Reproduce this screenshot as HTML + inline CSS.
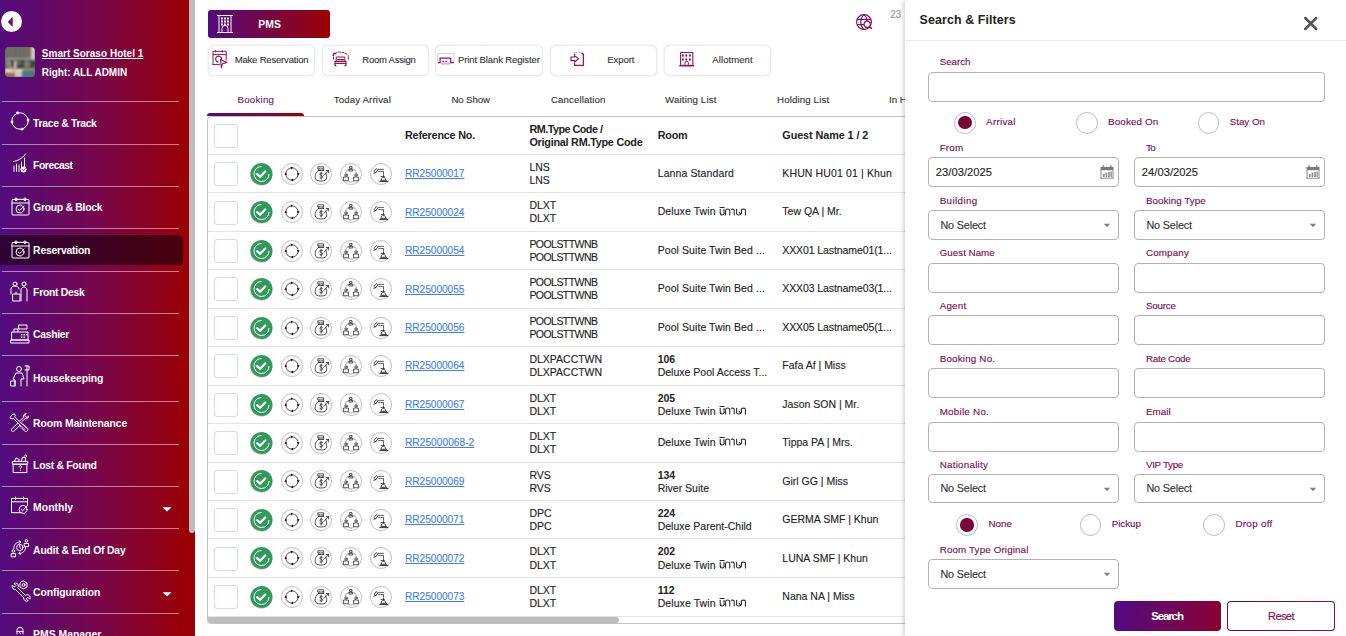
<!DOCTYPE html><html><head><meta charset="utf-8"><style>
*{box-sizing:border-box}
html,body{margin:0;padding:0}
body{width:1346px;height:636px;overflow:hidden;position:relative;background:#fff;font-family:"Liberation Sans",sans-serif}
.t{position:absolute;white-space:nowrap;line-height:1}
.n{-webkit-text-stroke:.12px currentColor}
.abs{position:absolute}
.cb{position:absolute;width:24px;height:24px;border:1px solid #d3d8f3;border-radius:3px;background:#fff}
.rc{position:absolute;width:22.2px;height:22.2px;border-radius:50%;border:1px solid #c2c2c2;background:#fff}
.bx{position:absolute;border:1px solid #b3b3b3;border-radius:4px;background:#fff}
.sep{position:absolute;left:2px;width:177px;height:1px;background:rgba(255,255,255,.5)}
.rl{position:absolute;left:208px;width:700px;height:1px;background:#e2e2e2}
</style></head><body>

<div class="abs" style="left:0;top:0;width:195px;height:636px;background:linear-gradient(90deg,#510b7e 0%,#77064b 50%,#9b0003 97%,#9b0003 100%)"></div>
<div class="abs" style="left:189px;top:0;width:6px;height:533px;background:#bdbdbd;border-radius:0 0 3px 3px"></div>
<div class="abs" style="left:1px;top:10.8px;width:21px;height:21px;border-radius:50%;background:#fff"></div>
<svg class="abs" style="left:0;top:0" width="30" height="40"><path d="M7.8 21.9 L12.7 16.7 L12.7 27.1 Z" fill="#7a0a4a"/></svg>
<div class="abs" style="left:5px;top:46.8px;width:30px;height:30px;border-radius:4px;overflow:hidden;background:#6b6a60"><svg width="30" height="30" style="filter:blur(.8px)">
<rect width="30" height="30" fill="#6e6c62"/>
<rect x="0" y="0" width="30" height="12" fill="#48707e"/>
<g fill="#8c6a4e"><rect x="2" y="0" width="2.5" height="11"/><rect x="6.5" y="0" width="2.5" height="11"/><rect x="11.5" y="0" width="2.5" height="11"/><rect x="16" y="0" width="2.5" height="11"/><rect x="20.5" y="0" width="2.5" height="11"/><rect x="24" y="0" width="2" height="11"/></g>
<rect x="26" y="0" width="4" height="17" fill="#c9cdca"/>
<rect x="0" y="11" width="27" height="2.2" fill="#9a9a92"/>
<rect x="0" y="13.2" width="30" height="8" fill="#3e403b"/>
<circle cx="3.5" cy="16.5" r="3.2" fill="#8a8c80"/><circle cx="22" cy="17" r="3.5" fill="#7b8070"/><rect x="9" y="14" width="2.5" height="8" fill="#d4d6d0"/><circle cx="14" cy="16" r="2" fill="#6a7466"/>
<rect x="0" y="21" width="30" height="9" fill="#a88d6c"/>
<rect x="0" y="21.5" width="8" height="4" fill="#e0ddd4"/><rect x="9" y="22.5" width="9" height="3" fill="#e6e2d8"/><rect x="4" y="19.5" width="4" height="3" fill="#b59a76"/>
<rect x="17" y="23.5" width="13" height="6.5" fill="#3f7e7a"/><rect x="0" y="26" width="9" height="4" fill="#8e7052"/><rect x="10" y="26" width="7" height="4" fill="#cfc6b6"/>
</svg></div>
<div class="t" style="left:41.8px;top:49.04px;font-size:10px;color:#fff;font-weight:bold;text-decoration:underline;letter-spacing:0.022px;">Smart Soraso Hotel 1</div>
<div class="t" style="left:41.8px;top:68.33px;font-size:10px;color:#fff;font-weight:bold;letter-spacing:-0.028px;">Right: ALL ADMIN</div>
<div class="sep" style="top:101.0px"></div>
<div class="sep" style="top:144.1px"></div>
<div class="sep" style="top:185.7px"></div>
<div class="sep" style="top:228.2px"></div>
<div class="sep" style="top:270.6px"></div>
<div class="sep" style="top:312.5px"></div>
<div class="sep" style="top:354.6px"></div>
<div class="sep" style="top:401.3px"></div>
<div class="sep" style="top:443.8px"></div>
<div class="sep" style="top:486.2px"></div>
<div class="sep" style="top:527.8px"></div>
<div class="sep" style="top:569.6px"></div>
<div class="sep" style="top:612.8px"></div>
<div class="abs" style="left:0;top:235.2px;width:183px;height:29.7px;background:rgba(25,0,12,.62);border-radius:0 4px 4px 0"></div>
<div class="t" style="left:33.1px;top:119.00px;font-size:10.4px;color:#fff;font-weight:bold;letter-spacing:-0.317px;">Trace &amp; Track</div>
<div class="t" style="left:33.1px;top:161.10px;font-size:10.4px;color:#fff;font-weight:bold;letter-spacing:-0.479px;">Forecast</div>
<div class="t" style="left:33.1px;top:203.10px;font-size:10.4px;color:#fff;font-weight:bold;letter-spacing:-0.280px;">Group &amp; Block</div>
<div class="t" style="left:33.1px;top:246.10px;font-size:10.4px;color:#fff;font-weight:bold;letter-spacing:-0.214px;">Reservation</div>
<div class="t" style="left:33.1px;top:288.10px;font-size:10.4px;color:#fff;font-weight:bold;letter-spacing:-0.288px;">Front Desk</div>
<div class="t" style="left:33.1px;top:330.10px;font-size:10.4px;color:#fff;font-weight:bold;letter-spacing:-0.312px;">Cashier</div>
<div class="t" style="left:33.1px;top:374.10px;font-size:10.4px;color:#fff;font-weight:bold;letter-spacing:-0.061px;">Housekeeping</div>
<div class="t" style="left:33.1px;top:419.10px;font-size:10.4px;color:#fff;font-weight:bold;letter-spacing:-0.072px;">Room Maintenance</div>
<div class="t" style="left:33.1px;top:461.10px;font-size:10.4px;color:#fff;font-weight:bold;letter-spacing:-0.291px;">Lost &amp; Found</div>
<div class="t" style="left:33.1px;top:503.10px;font-size:10.4px;color:#fff;font-weight:bold;letter-spacing:0.026px;">Monthly</div>
<div class="t" style="left:33.1px;top:546.10px;font-size:10.4px;color:#fff;font-weight:bold;letter-spacing:-0.191px;">Audit &amp; End Of Day</div>
<div class="t" style="left:33.1px;top:588.10px;font-size:10.4px;color:#fff;font-weight:bold;letter-spacing:-0.071px;">Configuration</div>
<div class="t" style="left:33.1px;top:630.10px;font-size:10.4px;color:#fff;font-weight:bold;">PMS Manager</div>
<svg class="abs" style="left:161px;top:506px" width="12" height="7"><path d="M1.5 1.3 L10.5 1.3 L6 5.5 Z" fill="#fff"/></svg>
<svg class="abs" style="left:161px;top:591px" width="12" height="7"><path d="M1.5 1.3 L10.5 1.3 L6 5.5 Z" fill="#fff"/></svg>
<svg class="abs" style="left:9px;top:110px" width="22" height="22" fill="none" stroke="#fff" stroke-width="1" stroke-linecap="round" stroke-linejoin="round"><circle cx="11" cy="11" r="8.2"/><g fill="#fff" stroke="none"><circle cx="8.5" cy="3" r="1.4"/><circle cx="19" cy="10" r="1.4"/><circle cx="13" cy="19.2" r="1.4"/><circle cx="3" cy="12" r="1.4"/></g></svg>
<svg class="abs" style="left:12px;top:153px" width="16" height="20" fill="none" stroke="#fff" stroke-width="1" stroke-linecap="round" stroke-linejoin="round"><path d="M2 18.5V13M4.5 18.5V11M7 18.5V12M9.5 18.5V9M12.5 15V5"/><path d="M1.5 8.5 C5 8 10 6 13.5 1"/><circle cx="11.5" cy="16.5" r="2.6" fill="#fff"/><path d="M10.3 16.5l1 1 1.7-1.8" stroke="#700850" stroke-width=".9"/></svg>
<svg class="abs" style="left:10.5px;top:196.6px" width="19" height="19" fill="none" stroke="#fff" stroke-width="1" stroke-linecap="round" stroke-linejoin="round"><rect x="1" y="2.5" width="17" height="15.5" rx="1"/><path d="M1 6H18"/><circle cx="5" cy="2.3" r="1.3"/><circle cx="14" cy="2.3" r="1.3"/><path d="M6.3 2.3h6.4"/><circle cx="9" cy="12" r="4"/><path d="M7.2 12l1.6 1.5 4.2-4.5"/></svg>
<svg class="abs" style="left:10.5px;top:239.5px" width="19" height="19" fill="none" stroke="#fff" stroke-width="1" stroke-linecap="round" stroke-linejoin="round"><rect x="1" y="2.5" width="17" height="15.5" rx="1"/><path d="M1 6H18"/><circle cx="5" cy="2.3" r="1.3"/><circle cx="14" cy="2.3" r="1.3"/><path d="M6.3 2.3h6.4"/><circle cx="9" cy="12" r="4"/><path d="M7.2 12l1.6 1.5 4.2-4.5"/></svg>
<svg class="abs" style="left:10px;top:281px" width="20" height="22" fill="none" stroke="#fff" stroke-width="1" stroke-linecap="round" stroke-linejoin="round"><circle cx="5" cy="3" r="2"/><circle cx="14" cy="3" r="2"/><path d="M1 13V8c0-2 2-3 4-3s4 1 4 3"/><path d="M11 20V9c0-2 1.5-3 3-3s3 1 3 3v11"/><rect x="3" y="13" width="7" height="7"/><path d="M6 13v-2"/></svg>
<svg class="abs" style="left:10px;top:324px" width="20" height="20" fill="none" stroke="#fff" stroke-width="1" stroke-linecap="round" stroke-linejoin="round"><rect x="9" y="1" width="8" height="4"/><path d="M2 8h16v8H2z"/><path d="M4 8V5h4v3"/><path d="M1 16h18v3H1z"/><g fill="#fff" stroke="none"><rect x="11" y="10" width="1.4" height="1.4"/><rect x="13.5" y="10" width="1.4" height="1.4"/><rect x="16" y="10" width="1.4" height="1.4"/><rect x="11" y="12.5" width="1.4" height="1.4"/><rect x="13.5" y="12.5" width="1.4" height="1.4"/></g></svg>
<svg class="abs" style="left:10px;top:365px" width="20" height="24" fill="none" stroke="#fff" stroke-width="1" stroke-linecap="round" stroke-linejoin="round"><circle cx="9" cy="4" r="2.5"/><path d="M5 21v-6l-2 -1 3-6h6l2 6h-3v7"/><rect x="1" y="16" width="4" height="5"/><path d="M17 1v20M15 1h4v4h-4"/></svg>
<svg class="abs" style="left:8px;top:412px" width="22" height="22" fill="none" stroke="#fff" stroke-width="1" stroke-linecap="round" stroke-linejoin="round"><path d="M4.6 2.6l1.8-.8 1 1.9-.9 1 7.6 7.6 1-.4 4.4 4.4c.6.6.6 1.6 0 2.2l-.6.6c-.6.6-1.6.6-2.2 0l-4.4-4.4.4-1L5.1 6.2l-1 .9-1.9-1z"/><path d="M13.8 14.4l3.4 3.4M15.2 13l3.4 3.4" stroke-width=".7"/><path d="M12.2 8.6l3.4-3.4c-.6-1.8.6-3.6 2.6-3.6l-1.4 1.6.6 1.6 1.6.6 1.6-1.4c0 2-1.8 3.2-3.6 2.6l-3.4 3.4M9.6 11.2L4 16.8c-.8.8-.8 2 0 2.4.5.5 1.6.4 2.4-.4l5.6-5.6"/></svg>
<svg class="abs" style="left:10px;top:451px" width="20" height="24" fill="none" stroke="#fff" stroke-width="1" stroke-linecap="round" stroke-linejoin="round"><path d="M3.5 13.2h13.4v8.4H3.5z"/><path d="M2.7 10.4h15v2.8h-15z"/><path d="M4.5 10.4l1.5-3.4 3.4 1.6-.8 1.8M11.5 10.4l.7-4 3.4.3-.3 3.7"/><path d="M14 6.6c-.2-1.4.8-2.8 2-2.6 1 .2 1.1 1.4.3 1.8"/><path d="M9.2 16c0-.8.6-1.4 1.2-1.4s1.2.5 1.2 1.2c0 .8-1.2.9-1.2 1.8M10.4 19v.3"/></svg>
<svg class="abs" style="left:10px;top:496px" width="20" height="20" fill="none" stroke="#fff" stroke-width="1" stroke-linecap="round" stroke-linejoin="round"><path d="M11 16.7H1.5V2.4h16v7"/><path d="M1.5 5.8h16"/><path d="M5.5 1v2.8M13.5 1v2.8"/><circle cx="13.1" cy="13.4" r="4"/><path d="M11.1 13.4l1.6 1.5 4.6-5.4"/></svg>
<svg class="abs" style="left:9px;top:536px" width="22" height="24" fill="none" stroke="#fff" stroke-width="1" stroke-linecap="round" stroke-linejoin="round"><circle cx="10.8" cy="11.5" r="3.2"/><path d="M10.8 9.6v2l1 .8"/><path d="M4.8 12.5c-.4-4 3-7 6.6-6.6M16.6 10.8c.4 4-3 7-6.6 6.6"/><path d="M10.2 4.8l1.5 1.1-1.2 1.4M11.3 18.5l-1.5-1.1 1.2-1.4"/><circle cx="17.4" cy="4.8" r="1.3"/><path d="M15.2 10.2V7.4h4.4v2.8z"/><circle cx="4.4" cy="15" r="1.3"/><path d="M2.2 20.4v-2.8h4.4v2.8z"/></svg>
<svg class="abs" style="left:9px;top:578px" width="24" height="24" fill="none" stroke="#fff" stroke-width="1" stroke-linecap="round" stroke-linejoin="round"><path d="M14.5 3l3.5 2v4l-3.5 2-3.5-2V5z"/><circle cx="14.6" cy="7" r="1.4"/><path d="M6.6 11.6l8 8M8.6 9.6l8 8"/><path d="M6.6 11.6a3.2 3.2 0 0 1-3.2-4.6l2 2 1.6-1.6-2-2a3.2 3.2 0 0 1 4.6 3.2"/><path d="M14.6 19.6a3.2 3.2 0 0 0 4.6 3.2l-2-2 1.6-1.6 2 2a3.2 3.2 0 0 0-3.2-4.6"/></svg>
<svg class="abs" style="left:10px;top:624px" width="20" height="14" fill="none" stroke="#fff" stroke-width="1" stroke-linecap="round" stroke-linejoin="round"><path d="M7 10V6.5c0-2 1.4-3.2 3-3.2s3 1.2 3 3.2V10"/><path d="M7 7.4h6M9.3 8.6l1.4.8"/></svg>
<div class="abs" style="left:208px;top:10px;width:122px;height:28.4px;border-radius:3px;background:linear-gradient(90deg,#520a7e,#9c0004)"></div>
<svg class="abs" style="left:216px;top:14px" width="18" height="20" fill="none" stroke="#fff" stroke-width="1"><path d="M1 1.5h16M1 18.5h16M3 1.5v17M15 1.5v17"/><g fill="#fff" stroke="none"><rect x="5" y="3.5" width="2" height="2"/><rect x="8" y="3.5" width="2" height="2"/><rect x="11" y="3.5" width="2" height="2"/><rect x="5" y="6.5" width="2" height="2"/><rect x="8" y="6.5" width="2" height="2"/><rect x="11" y="6.5" width="2" height="2"/><rect x="5" y="9.5" width="2" height="2"/><rect x="8" y="9.5" width="2" height="2"/><rect x="11" y="9.5" width="2" height="2"/></g><path d="M6 18.5v-4a3 3 0 0 1 6 0v4"/></svg>
<div class="t" style="left:258.3px;top:20.20px;font-size:10.4px;color:#fff;font-weight:bold;">PMS</div>
<svg class="abs" style="left:853.5px;top:12.3px" width="20" height="20"><defs><linearGradient id="gg" x1="0" x2="1" y1="0" y2="1"><stop offset="0" stop-color="#5e1a8a"/><stop offset="1" stop-color="#9a0a30"/></linearGradient></defs><g fill="none" stroke="url(#gg)" stroke-width="1.15"><circle cx="10" cy="10" r="7.4"/><path d="M3.2 7.3h13.6M3.2 12.6h7.5"/><path d="M10 2.6c-2.2 2-3.2 4.6-3.2 7.4s1 5.4 3.2 7.4M10 2.6c2.2 2 3.2 4.6 3.2 7.4"/><circle cx="13.2" cy="12.2" r="3.1" fill="#fff"/><path d="M15.5 14.5l2.3 2.3" stroke-width="1.5"/></g></svg>
<div class="t n" style="left:890.2px;top:9.94px;font-size:10px;color:#8c97a6;font-weight:normal;letter-spacing:-0.262px;">23</div>
<div class="abs" style="left:207.5px;top:45.2px;width:107.6px;height:30.8px;border:1px solid #ececec;border-radius:6px;box-shadow:0 0 2px rgba(0,0,0,.13);background:#fff"></div>
<div class="t n" style="left:234.7px;top:54.96px;font-size:9.5px;color:#333;font-weight:normal;letter-spacing:-0.179px;">Make Reservation</div>
<div class="abs" style="left:321.7px;top:45.2px;width:107.6px;height:30.8px;border:1px solid #ececec;border-radius:6px;box-shadow:0 0 2px rgba(0,0,0,.13);background:#fff"></div>
<div class="t n" style="left:362.3px;top:54.96px;font-size:9.5px;color:#333;font-weight:normal;letter-spacing:-0.241px;">Room Assign</div>
<div class="abs" style="left:435.4px;top:45.2px;width:107.6px;height:30.8px;border:1px solid #ececec;border-radius:6px;box-shadow:0 0 2px rgba(0,0,0,.13);background:#fff"></div>
<div class="t n" style="left:458.1px;top:54.96px;font-size:9.5px;color:#333;font-weight:normal;letter-spacing:-0.115px;">Print Blank Register</div>
<div class="abs" style="left:549.6px;top:45.2px;width:107.6px;height:30.8px;border:1px solid #ececec;border-radius:6px;box-shadow:0 0 2px rgba(0,0,0,.13);background:#fff"></div>
<div class="t n" style="left:607.3px;top:54.96px;font-size:9.5px;color:#333;font-weight:normal;letter-spacing:-0.063px;">Export</div>
<div class="abs" style="left:663.7px;top:45.2px;width:107.6px;height:30.8px;border:1px solid #ececec;border-radius:6px;box-shadow:0 0 2px rgba(0,0,0,.13);background:#fff"></div>
<div class="t n" style="left:712.3px;top:54.96px;font-size:9.5px;color:#333;font-weight:normal;letter-spacing:0.092px;">Allotment</div>
<svg class="abs" style="left:208px;top:46px" width="28" height="26" fill="none" stroke="#8b1a52" stroke-width="1" stroke-linecap="round" stroke-linejoin="round"><path d="M5 18.6V5.3h13.2v8.8M5 18.6h6.5"/><path d="M5 8.6h13.2"/><path d="M7.4 4.6v1.4M14.3 4.6v1.4"/><path d="M13.6 13.7a3 3 0 1 0-3.4 2.4" stroke-width="1.1"/><path d="M12.5 13.4l6.3 3-4.3 1.3-1.2 3.9z" fill="#fff" stroke-width="1.1"/></svg>
<svg class="abs" style="left:328px;top:46px" width="28" height="26" fill="none" stroke="#8b1a52" stroke-width="1" stroke-linecap="round" stroke-linejoin="round"><path d="M8.2 15.4v-4.4h8.6v4.4"/><path d="M7 19.4v-4h11v4M7 17.3h11M7.8 19.4v.6M17.2 19.4v.6" stroke-width="1.2"/><path d="M9.6 13.6h2.4M13 13.6h2.4" stroke-width="1.4"/><path d="M5.5 13V9.8c.5-2.6 3-3.6 6-3.6 4 0 7.5 1.4 8.8 3.4v3.6" stroke-dasharray="2 1.2"/><path d="M5 9.5l.8-2.4 2.2.8" stroke-width="1.1"/></svg>
<svg class="abs" style="left:434px;top:46px" width="28" height="26"><path d="M3.9 16.6V7.6h16v9" fill="none" stroke="#d0d0d0" stroke-width="1"/><path d="M3.9 16.6h2.2v-4.4h10.6v4.4h3.2" fill="none" stroke="#8b1a52" stroke-width="1.2"/><path d="M7 17.6h9" stroke="#d9b0c4" stroke-width="2"/><path d="M8.6 15.4h1.6M11.4 15.4h1.6" stroke="#8b1a52" stroke-width="1.3"/></svg>
<svg class="abs" style="left:566px;top:46px" width="28" height="26" fill="none" stroke="#8b1a52" stroke-width="1" stroke-linecap="round" stroke-linejoin="round"><path d="M8.2 6.6h7.8" stroke="#ccc"/><path d="M16 7.4l1.4 1v11H8.6v-2.2M8.6 8.2v.3" stroke-width="1.3"/><path d="M5 11h3.6V9.6l4 3.2-4 3.2v-1.4H5z" stroke-width="1.2"/></svg>
<svg class="abs" style="left:674px;top:46px" width="28" height="26" fill="none" stroke="#8b1a52" stroke-width="1" stroke-linecap="round" stroke-linejoin="round"><path d="M6.6 18.3V6.5h12.2v11.8" stroke-width="1.1"/><path d="M6 19.6h13.4" stroke-width="1.8"/><g fill="#8b1a52" stroke="none"><rect x="8" y="8.4" width="1.8" height="2.2"/><rect x="11.4" y="8.4" width="1.8" height="2.2"/><rect x="15" y="8.4" width="1.8" height="2.2"/><rect x="8" y="12.4" width="1.8" height="2.2"/><rect x="11.4" y="12.4" width="1.8" height="2.2"/><rect x="15" y="12.4" width="1.8" height="2.2"/></g><path d="M11 18.3v-1.3a1.7 1.7 0 0 1 3.4 0v1.3"/></svg>
<div class="t n" style="left:237.5px;top:95.49px;font-size:9.7px;color:#6b1b6b;font-weight:normal;letter-spacing:0.230px;">Booking</div>
<div class="t n" style="left:333.7px;top:95.49px;font-size:9.7px;color:#333;font-weight:normal;letter-spacing:0.138px;">Today Arrival</div>
<div class="t n" style="left:451.4px;top:95.49px;font-size:9.7px;color:#333;font-weight:normal;letter-spacing:-0.119px;">No Show</div>
<div class="t n" style="left:551px;top:95.49px;font-size:9.7px;color:#333;font-weight:normal;letter-spacing:0.107px;">Cancellation</div>
<div class="t n" style="left:665px;top:95.49px;font-size:9.7px;color:#333;font-weight:normal;letter-spacing:0.153px;">Waiting List</div>
<div class="t n" style="left:777px;top:95.49px;font-size:9.7px;color:#333;font-weight:normal;letter-spacing:0.134px;">Holding List</div>
<div class="t n" style="left:889px;top:95.49px;font-size:9.7px;color:#333;font-weight:normal;">In House</div>
<div class="abs" style="left:207px;top:116px;width:760px;height:508px;border:1px solid #c2c2c2;border-right:none;border-radius:5px 0 0 4px"></div>
<div class="abs" style="left:207px;top:112.8px;width:97px;height:3.6px;border-radius:3px 3px 0 0;background:linear-gradient(90deg,#520a7e,#9c0004)"></div>
<div class="cb" style="left:214px;top:124px"></div>
<div class="t" style="left:405px;top:130.06px;font-size:10.8px;color:#222;font-weight:bold;letter-spacing:-0.200px;">Reference No.</div>
<div class="t" style="left:529.4px;top:123.96px;font-size:10.8px;color:#222;font-weight:bold;letter-spacing:-0.514px;">RM.Type Code /</div>
<div class="t" style="left:529.4px;top:137.06px;font-size:10.8px;color:#222;font-weight:bold;letter-spacing:-0.234px;">Original RM.Type Code</div>
<div class="t" style="left:657.7px;top:130.06px;font-size:10.8px;color:#222;font-weight:bold;letter-spacing:-0.196px;">Room</div>
<div class="t" style="left:782.3px;top:130.06px;font-size:10.8px;color:#222;font-weight:bold;letter-spacing:-0.067px;">Guest Name 1 / 2</div>
<div class="rl" style="top:153.8px"></div>
<div class="cb" style="left:214px;top:162.10px"></div>
<svg class="abs" style="left:249px;top:161.80px" width="25" height="26"><circle cx="12.2" cy="12.8" r="11" fill="#c8c8c8"/><circle cx="12.5" cy="12" r="11" fill="#2f9a5c"/><path d="M12.5 4.5 A7.5 7.5 0 1 0 20 12" fill="none" stroke="#fff" stroke-width="1"/><path d="M8.2 12.1l2.8 2.6 5.2-5.2" fill="none" stroke="#fff" stroke-width="2.3" stroke-linecap="round" stroke-linejoin="round"/></svg>
<div class="rc" style="left:280.9px;top:162.70px"></div>
<div class="rc" style="left:310.1px;top:162.70px"></div>
<div class="rc" style="left:340.0px;top:162.70px"></div>
<div class="rc" style="left:370.3px;top:162.70px"></div>
<svg class="abs" style="left:282px;top:163.80px" width="20" height="20" fill="none" stroke="#1a1a1a" stroke-width=".75" stroke-linecap="round" stroke-linejoin="round"><circle cx="10" cy="10" r="6.2"/><g fill="#111" stroke="none"><path d="M8.8 2.4l2.4 1.4-2.4 1.4z"/><path d="M14.8 9.2l1.4 2.4 1.4-2.4z"/><path d="M11.2 14.6l-2.4 1.4 2.4 1.4z"/><path d="M2.4 10.8l1.4-2.4 1.4 2.4z"/></g></svg>
<svg class="abs" style="left:311.2px;top:163.80px" width="20" height="20" fill="none" stroke="#1a1a1a" stroke-width=".75" stroke-linecap="round" stroke-linejoin="round"><path d="M7.2 2.8h5.4v2.2H7.2z"/><path d="M8 5L7.5 6.5M12 5l.5 1.5"/><path d="M7.5 6.5C4.2 8.5 4 12 4.3 14 4.6 16.2 6.5 17 10 17s5.4-.8 5.7-3c.2-1.5-.1-3.5-1.1-5"/><path d="M7.5 6.5h5"/><path d="M11.6 9.6c-.4-.8-2.8-1-2.8.6 0 1.4 2.8 1.1 2.8 2.6s-2.6 1.5-3 .6M10.2 8.2V15"/><path d="M12.8 11.5l4.6-4.8M15.2 6.5h2.4v2.4"/></svg>
<svg class="abs" style="left:341.1px;top:163.80px" width="20" height="20" fill="none" stroke="#1a1a1a" stroke-width=".75" stroke-linecap="round" stroke-linejoin="round"><path d="M9 2.6h2v1.8H9zM8.3 5.4h3.4v1.6H8.3z"/><circle cx="5" cy="11" r="1.2"/><path d="M2.6 16.4v-3.4h4.8v3.4z"/><circle cx="15" cy="11" r="1.2"/><path d="M12.6 16.4v-3.4h4.8v3.4z"/><path d="M4.6 9c.6-2.2 2-3.4 3.2-3.8M15.4 9c-.6-2.2-2-3.4-3.2-3.8M7.6 17.4c1.5.8 3.3.8 4.8 0" stroke-dasharray="1.2 1.2" stroke="#666"/></svg>
<svg class="abs" style="left:371.4px;top:163.80px" width="20" height="20" fill="none" stroke="#1a1a1a" stroke-width=".75" stroke-linecap="round" stroke-linejoin="round"><path d="M3.2 7.2l2-2.6 1.6 1.4-2 2.6z"/><path d="M2.8 9.5l2.4-1.3"/><path d="M7.5 5.4h2M10.5 5.4h2M7.8 7.6h1.5M10.3 7.6h2.2" /><path d="M12.5 8.5v1.5M12.5 11v1.5"/><path d="M10 12.6h3.5"/><path d="M10.2 15.5c0-1.2.8-2 2.2-2s2.2.8 2.2 2"/><path d="M8.8 17.6h8M9.8 16.3h6" stroke-width=".9"/></svg>
<div class="t n" style="left:405px;top:169.21px;font-size:10.15px;color:#3f7ff0;font-weight:normal;text-decoration:underline;letter-spacing:-0.027px;">RR25000017</div>
<div class="t n" style="left:529.4px;top:161.91px;font-size:10.5px;color:#222;font-weight:normal;">LNS</div>
<div class="t n" style="left:529.4px;top:175.01px;font-size:10.5px;color:#222;font-weight:normal;">LNS</div>
<div class="t n" style="left:657.7px;top:168.01px;font-size:10.5px;color:#222;font-weight:normal;letter-spacing:0.108px;">Lanna Standard</div>
<div class="t n" style="left:782.3px;top:168.01px;font-size:10.5px;color:#222;font-weight:normal;letter-spacing:0.130px;">KHUN HU01 01 | Khun</div>
<div class="rl" style="top:192.35px"></div>
<div class="cb" style="left:214px;top:200.55px"></div>
<svg class="abs" style="left:249px;top:200.25px" width="25" height="26"><circle cx="12.2" cy="12.8" r="11" fill="#c8c8c8"/><circle cx="12.5" cy="12" r="11" fill="#2f9a5c"/><path d="M12.5 4.5 A7.5 7.5 0 1 0 20 12" fill="none" stroke="#fff" stroke-width="1"/><path d="M8.2 12.1l2.8 2.6 5.2-5.2" fill="none" stroke="#fff" stroke-width="2.3" stroke-linecap="round" stroke-linejoin="round"/></svg>
<div class="rc" style="left:280.9px;top:201.15px"></div>
<div class="rc" style="left:310.1px;top:201.15px"></div>
<div class="rc" style="left:340.0px;top:201.15px"></div>
<div class="rc" style="left:370.3px;top:201.15px"></div>
<svg class="abs" style="left:282px;top:202.25px" width="20" height="20" fill="none" stroke="#1a1a1a" stroke-width=".75" stroke-linecap="round" stroke-linejoin="round"><circle cx="10" cy="10" r="6.2"/><g fill="#111" stroke="none"><path d="M8.8 2.4l2.4 1.4-2.4 1.4z"/><path d="M14.8 9.2l1.4 2.4 1.4-2.4z"/><path d="M11.2 14.6l-2.4 1.4 2.4 1.4z"/><path d="M2.4 10.8l1.4-2.4 1.4 2.4z"/></g></svg>
<svg class="abs" style="left:311.2px;top:202.25px" width="20" height="20" fill="none" stroke="#1a1a1a" stroke-width=".75" stroke-linecap="round" stroke-linejoin="round"><path d="M7.2 2.8h5.4v2.2H7.2z"/><path d="M8 5L7.5 6.5M12 5l.5 1.5"/><path d="M7.5 6.5C4.2 8.5 4 12 4.3 14 4.6 16.2 6.5 17 10 17s5.4-.8 5.7-3c.2-1.5-.1-3.5-1.1-5"/><path d="M7.5 6.5h5"/><path d="M11.6 9.6c-.4-.8-2.8-1-2.8.6 0 1.4 2.8 1.1 2.8 2.6s-2.6 1.5-3 .6M10.2 8.2V15"/><path d="M12.8 11.5l4.6-4.8M15.2 6.5h2.4v2.4"/></svg>
<svg class="abs" style="left:341.1px;top:202.25px" width="20" height="20" fill="none" stroke="#1a1a1a" stroke-width=".75" stroke-linecap="round" stroke-linejoin="round"><path d="M9 2.6h2v1.8H9zM8.3 5.4h3.4v1.6H8.3z"/><circle cx="5" cy="11" r="1.2"/><path d="M2.6 16.4v-3.4h4.8v3.4z"/><circle cx="15" cy="11" r="1.2"/><path d="M12.6 16.4v-3.4h4.8v3.4z"/><path d="M4.6 9c.6-2.2 2-3.4 3.2-3.8M15.4 9c-.6-2.2-2-3.4-3.2-3.8M7.6 17.4c1.5.8 3.3.8 4.8 0" stroke-dasharray="1.2 1.2" stroke="#666"/></svg>
<svg class="abs" style="left:371.4px;top:202.25px" width="20" height="20" fill="none" stroke="#1a1a1a" stroke-width=".75" stroke-linecap="round" stroke-linejoin="round"><path d="M3.2 7.2l2-2.6 1.6 1.4-2 2.6z"/><path d="M2.8 9.5l2.4-1.3"/><path d="M7.5 5.4h2M10.5 5.4h2M7.8 7.6h1.5M10.3 7.6h2.2" /><path d="M12.5 8.5v1.5M12.5 11v1.5"/><path d="M10 12.6h3.5"/><path d="M10.2 15.5c0-1.2.8-2 2.2-2s2.2.8 2.2 2"/><path d="M8.8 17.6h8M9.8 16.3h6" stroke-width=".9"/></svg>
<div class="t n" style="left:405px;top:207.66px;font-size:10.15px;color:#3f7ff0;font-weight:normal;text-decoration:underline;letter-spacing:-0.027px;">RR25000024</div>
<div class="t n" style="left:529.4px;top:200.36px;font-size:10.5px;color:#222;font-weight:normal;">DLXT</div>
<div class="t n" style="left:529.4px;top:213.46px;font-size:10.5px;color:#222;font-weight:normal;">DLXT</div>
<div class="t n" style="left:657.7px;top:206.46px;font-size:10.5px;color:#222;font-weight:normal;letter-spacing:0.085px;">Deluxe Twin</div>
<svg class="abs" style="left:719.3px;top:205.65px" width="28" height="10" fill="none" stroke="#262626" stroke-width="1.05" stroke-linecap="round"><path d="M1.2 3.2V7.6Q1.2 9 2.7 9H3.4Q5 9 5 7.6V3.2M1 1.5H5.2M1.2 7.2l.9.9"/><path d="M6.6 9V4.8Q6.6 3 8.6 3T10.8 4.8V9M6.6 6.6l-.7.7"/><path d="M12.2 3.3Q15 2.6 15.2 4.4V9"/><path d="M17.6 3.2V7.6Q17.6 9 19.6 9T22.4 7.6V3.2M20 6.2l1.6 1.6"/><path d="M23.4 3.3Q26.2 2.6 26.4 4.4V9"/></svg>
<div class="t n" style="left:782.3px;top:206.46px;font-size:10.5px;color:#222;font-weight:normal;">Tew QA | Mr.</div>
<div class="rl" style="top:230.80px"></div>
<div class="cb" style="left:214px;top:239.00px"></div>
<svg class="abs" style="left:249px;top:238.70px" width="25" height="26"><circle cx="12.2" cy="12.8" r="11" fill="#c8c8c8"/><circle cx="12.5" cy="12" r="11" fill="#2f9a5c"/><path d="M12.5 4.5 A7.5 7.5 0 1 0 20 12" fill="none" stroke="#fff" stroke-width="1"/><path d="M8.2 12.1l2.8 2.6 5.2-5.2" fill="none" stroke="#fff" stroke-width="2.3" stroke-linecap="round" stroke-linejoin="round"/></svg>
<div class="rc" style="left:280.9px;top:239.60px"></div>
<div class="rc" style="left:310.1px;top:239.60px"></div>
<div class="rc" style="left:340.0px;top:239.60px"></div>
<div class="rc" style="left:370.3px;top:239.60px"></div>
<svg class="abs" style="left:282px;top:240.70px" width="20" height="20" fill="none" stroke="#1a1a1a" stroke-width=".75" stroke-linecap="round" stroke-linejoin="round"><circle cx="10" cy="10" r="6.2"/><g fill="#111" stroke="none"><path d="M8.8 2.4l2.4 1.4-2.4 1.4z"/><path d="M14.8 9.2l1.4 2.4 1.4-2.4z"/><path d="M11.2 14.6l-2.4 1.4 2.4 1.4z"/><path d="M2.4 10.8l1.4-2.4 1.4 2.4z"/></g></svg>
<svg class="abs" style="left:311.2px;top:240.70px" width="20" height="20" fill="none" stroke="#1a1a1a" stroke-width=".75" stroke-linecap="round" stroke-linejoin="round"><path d="M7.2 2.8h5.4v2.2H7.2z"/><path d="M8 5L7.5 6.5M12 5l.5 1.5"/><path d="M7.5 6.5C4.2 8.5 4 12 4.3 14 4.6 16.2 6.5 17 10 17s5.4-.8 5.7-3c.2-1.5-.1-3.5-1.1-5"/><path d="M7.5 6.5h5"/><path d="M11.6 9.6c-.4-.8-2.8-1-2.8.6 0 1.4 2.8 1.1 2.8 2.6s-2.6 1.5-3 .6M10.2 8.2V15"/><path d="M12.8 11.5l4.6-4.8M15.2 6.5h2.4v2.4"/></svg>
<svg class="abs" style="left:341.1px;top:240.70px" width="20" height="20" fill="none" stroke="#1a1a1a" stroke-width=".75" stroke-linecap="round" stroke-linejoin="round"><path d="M9 2.6h2v1.8H9zM8.3 5.4h3.4v1.6H8.3z"/><circle cx="5" cy="11" r="1.2"/><path d="M2.6 16.4v-3.4h4.8v3.4z"/><circle cx="15" cy="11" r="1.2"/><path d="M12.6 16.4v-3.4h4.8v3.4z"/><path d="M4.6 9c.6-2.2 2-3.4 3.2-3.8M15.4 9c-.6-2.2-2-3.4-3.2-3.8M7.6 17.4c1.5.8 3.3.8 4.8 0" stroke-dasharray="1.2 1.2" stroke="#666"/></svg>
<svg class="abs" style="left:371.4px;top:240.70px" width="20" height="20" fill="none" stroke="#1a1a1a" stroke-width=".75" stroke-linecap="round" stroke-linejoin="round"><path d="M3.2 7.2l2-2.6 1.6 1.4-2 2.6z"/><path d="M2.8 9.5l2.4-1.3"/><path d="M7.5 5.4h2M10.5 5.4h2M7.8 7.6h1.5M10.3 7.6h2.2" /><path d="M12.5 8.5v1.5M12.5 11v1.5"/><path d="M10 12.6h3.5"/><path d="M10.2 15.5c0-1.2.8-2 2.2-2s2.2.8 2.2 2"/><path d="M8.8 17.6h8M9.8 16.3h6" stroke-width=".9"/></svg>
<div class="t n" style="left:405px;top:246.11px;font-size:10.15px;color:#3f7ff0;font-weight:normal;text-decoration:underline;letter-spacing:-0.027px;">RR25000054</div>
<div class="t n" style="left:529.4px;top:238.81px;font-size:10.5px;color:#222;font-weight:normal;letter-spacing:-0.545px;">POOLSTTWNB</div>
<div class="t n" style="left:529.4px;top:251.91px;font-size:10.5px;color:#222;font-weight:normal;letter-spacing:-0.545px;">POOLSTTWNB</div>
<div class="t n" style="left:657.7px;top:244.91px;font-size:10.5px;color:#222;font-weight:normal;letter-spacing:0.076px;">Pool Suite Twin Bed ...</div>
<div class="t n" style="left:782.3px;top:244.91px;font-size:10.5px;color:#222;font-weight:normal;letter-spacing:-0.093px;">XXX01 Lastname01(1...</div>
<div class="rl" style="top:269.25px"></div>
<div class="cb" style="left:214px;top:277.45px"></div>
<svg class="abs" style="left:249px;top:277.15px" width="25" height="26"><circle cx="12.2" cy="12.8" r="11" fill="#c8c8c8"/><circle cx="12.5" cy="12" r="11" fill="#2f9a5c"/><path d="M12.5 4.5 A7.5 7.5 0 1 0 20 12" fill="none" stroke="#fff" stroke-width="1"/><path d="M8.2 12.1l2.8 2.6 5.2-5.2" fill="none" stroke="#fff" stroke-width="2.3" stroke-linecap="round" stroke-linejoin="round"/></svg>
<div class="rc" style="left:280.9px;top:278.05px"></div>
<div class="rc" style="left:310.1px;top:278.05px"></div>
<div class="rc" style="left:340.0px;top:278.05px"></div>
<div class="rc" style="left:370.3px;top:278.05px"></div>
<svg class="abs" style="left:282px;top:279.15px" width="20" height="20" fill="none" stroke="#1a1a1a" stroke-width=".75" stroke-linecap="round" stroke-linejoin="round"><circle cx="10" cy="10" r="6.2"/><g fill="#111" stroke="none"><path d="M8.8 2.4l2.4 1.4-2.4 1.4z"/><path d="M14.8 9.2l1.4 2.4 1.4-2.4z"/><path d="M11.2 14.6l-2.4 1.4 2.4 1.4z"/><path d="M2.4 10.8l1.4-2.4 1.4 2.4z"/></g></svg>
<svg class="abs" style="left:311.2px;top:279.15px" width="20" height="20" fill="none" stroke="#1a1a1a" stroke-width=".75" stroke-linecap="round" stroke-linejoin="round"><path d="M7.2 2.8h5.4v2.2H7.2z"/><path d="M8 5L7.5 6.5M12 5l.5 1.5"/><path d="M7.5 6.5C4.2 8.5 4 12 4.3 14 4.6 16.2 6.5 17 10 17s5.4-.8 5.7-3c.2-1.5-.1-3.5-1.1-5"/><path d="M7.5 6.5h5"/><path d="M11.6 9.6c-.4-.8-2.8-1-2.8.6 0 1.4 2.8 1.1 2.8 2.6s-2.6 1.5-3 .6M10.2 8.2V15"/><path d="M12.8 11.5l4.6-4.8M15.2 6.5h2.4v2.4"/></svg>
<svg class="abs" style="left:341.1px;top:279.15px" width="20" height="20" fill="none" stroke="#1a1a1a" stroke-width=".75" stroke-linecap="round" stroke-linejoin="round"><path d="M9 2.6h2v1.8H9zM8.3 5.4h3.4v1.6H8.3z"/><circle cx="5" cy="11" r="1.2"/><path d="M2.6 16.4v-3.4h4.8v3.4z"/><circle cx="15" cy="11" r="1.2"/><path d="M12.6 16.4v-3.4h4.8v3.4z"/><path d="M4.6 9c.6-2.2 2-3.4 3.2-3.8M15.4 9c-.6-2.2-2-3.4-3.2-3.8M7.6 17.4c1.5.8 3.3.8 4.8 0" stroke-dasharray="1.2 1.2" stroke="#666"/></svg>
<svg class="abs" style="left:371.4px;top:279.15px" width="20" height="20" fill="none" stroke="#1a1a1a" stroke-width=".75" stroke-linecap="round" stroke-linejoin="round"><path d="M3.2 7.2l2-2.6 1.6 1.4-2 2.6z"/><path d="M2.8 9.5l2.4-1.3"/><path d="M7.5 5.4h2M10.5 5.4h2M7.8 7.6h1.5M10.3 7.6h2.2" /><path d="M12.5 8.5v1.5M12.5 11v1.5"/><path d="M10 12.6h3.5"/><path d="M10.2 15.5c0-1.2.8-2 2.2-2s2.2.8 2.2 2"/><path d="M8.8 17.6h8M9.8 16.3h6" stroke-width=".9"/></svg>
<div class="t n" style="left:405px;top:284.56px;font-size:10.15px;color:#3f7ff0;font-weight:normal;text-decoration:underline;letter-spacing:-0.027px;">RR25000055</div>
<div class="t n" style="left:529.4px;top:277.26px;font-size:10.5px;color:#222;font-weight:normal;letter-spacing:-0.545px;">POOLSTTWNB</div>
<div class="t n" style="left:529.4px;top:290.36px;font-size:10.5px;color:#222;font-weight:normal;letter-spacing:-0.545px;">POOLSTTWNB</div>
<div class="t n" style="left:657.7px;top:283.36px;font-size:10.5px;color:#222;font-weight:normal;letter-spacing:0.076px;">Pool Suite Twin Bed ...</div>
<div class="t n" style="left:782.3px;top:283.36px;font-size:10.5px;color:#222;font-weight:normal;letter-spacing:-0.093px;">XXX03 Lastname03(1...</div>
<div class="rl" style="top:307.70px"></div>
<div class="cb" style="left:214px;top:315.90px"></div>
<svg class="abs" style="left:249px;top:315.60px" width="25" height="26"><circle cx="12.2" cy="12.8" r="11" fill="#c8c8c8"/><circle cx="12.5" cy="12" r="11" fill="#2f9a5c"/><path d="M12.5 4.5 A7.5 7.5 0 1 0 20 12" fill="none" stroke="#fff" stroke-width="1"/><path d="M8.2 12.1l2.8 2.6 5.2-5.2" fill="none" stroke="#fff" stroke-width="2.3" stroke-linecap="round" stroke-linejoin="round"/></svg>
<div class="rc" style="left:280.9px;top:316.50px"></div>
<div class="rc" style="left:310.1px;top:316.50px"></div>
<div class="rc" style="left:340.0px;top:316.50px"></div>
<div class="rc" style="left:370.3px;top:316.50px"></div>
<svg class="abs" style="left:282px;top:317.60px" width="20" height="20" fill="none" stroke="#1a1a1a" stroke-width=".75" stroke-linecap="round" stroke-linejoin="round"><circle cx="10" cy="10" r="6.2"/><g fill="#111" stroke="none"><path d="M8.8 2.4l2.4 1.4-2.4 1.4z"/><path d="M14.8 9.2l1.4 2.4 1.4-2.4z"/><path d="M11.2 14.6l-2.4 1.4 2.4 1.4z"/><path d="M2.4 10.8l1.4-2.4 1.4 2.4z"/></g></svg>
<svg class="abs" style="left:311.2px;top:317.60px" width="20" height="20" fill="none" stroke="#1a1a1a" stroke-width=".75" stroke-linecap="round" stroke-linejoin="round"><path d="M7.2 2.8h5.4v2.2H7.2z"/><path d="M8 5L7.5 6.5M12 5l.5 1.5"/><path d="M7.5 6.5C4.2 8.5 4 12 4.3 14 4.6 16.2 6.5 17 10 17s5.4-.8 5.7-3c.2-1.5-.1-3.5-1.1-5"/><path d="M7.5 6.5h5"/><path d="M11.6 9.6c-.4-.8-2.8-1-2.8.6 0 1.4 2.8 1.1 2.8 2.6s-2.6 1.5-3 .6M10.2 8.2V15"/><path d="M12.8 11.5l4.6-4.8M15.2 6.5h2.4v2.4"/></svg>
<svg class="abs" style="left:341.1px;top:317.60px" width="20" height="20" fill="none" stroke="#1a1a1a" stroke-width=".75" stroke-linecap="round" stroke-linejoin="round"><path d="M9 2.6h2v1.8H9zM8.3 5.4h3.4v1.6H8.3z"/><circle cx="5" cy="11" r="1.2"/><path d="M2.6 16.4v-3.4h4.8v3.4z"/><circle cx="15" cy="11" r="1.2"/><path d="M12.6 16.4v-3.4h4.8v3.4z"/><path d="M4.6 9c.6-2.2 2-3.4 3.2-3.8M15.4 9c-.6-2.2-2-3.4-3.2-3.8M7.6 17.4c1.5.8 3.3.8 4.8 0" stroke-dasharray="1.2 1.2" stroke="#666"/></svg>
<svg class="abs" style="left:371.4px;top:317.60px" width="20" height="20" fill="none" stroke="#1a1a1a" stroke-width=".75" stroke-linecap="round" stroke-linejoin="round"><path d="M3.2 7.2l2-2.6 1.6 1.4-2 2.6z"/><path d="M2.8 9.5l2.4-1.3"/><path d="M7.5 5.4h2M10.5 5.4h2M7.8 7.6h1.5M10.3 7.6h2.2" /><path d="M12.5 8.5v1.5M12.5 11v1.5"/><path d="M10 12.6h3.5"/><path d="M10.2 15.5c0-1.2.8-2 2.2-2s2.2.8 2.2 2"/><path d="M8.8 17.6h8M9.8 16.3h6" stroke-width=".9"/></svg>
<div class="t n" style="left:405px;top:323.01px;font-size:10.15px;color:#3f7ff0;font-weight:normal;text-decoration:underline;letter-spacing:-0.027px;">RR25000056</div>
<div class="t n" style="left:529.4px;top:315.71px;font-size:10.5px;color:#222;font-weight:normal;letter-spacing:-0.545px;">POOLSTTWNB</div>
<div class="t n" style="left:529.4px;top:328.81px;font-size:10.5px;color:#222;font-weight:normal;letter-spacing:-0.545px;">POOLSTTWNB</div>
<div class="t n" style="left:657.7px;top:321.81px;font-size:10.5px;color:#222;font-weight:normal;letter-spacing:0.076px;">Pool Suite Twin Bed ...</div>
<div class="t n" style="left:782.3px;top:321.81px;font-size:10.5px;color:#222;font-weight:normal;letter-spacing:-0.093px;">XXX05 Lastname05(1...</div>
<div class="rl" style="top:346.15px"></div>
<div class="cb" style="left:214px;top:354.35px"></div>
<svg class="abs" style="left:249px;top:354.05px" width="25" height="26"><circle cx="12.2" cy="12.8" r="11" fill="#c8c8c8"/><circle cx="12.5" cy="12" r="11" fill="#2f9a5c"/><path d="M12.5 4.5 A7.5 7.5 0 1 0 20 12" fill="none" stroke="#fff" stroke-width="1"/><path d="M8.2 12.1l2.8 2.6 5.2-5.2" fill="none" stroke="#fff" stroke-width="2.3" stroke-linecap="round" stroke-linejoin="round"/></svg>
<div class="rc" style="left:280.9px;top:354.95px"></div>
<div class="rc" style="left:310.1px;top:354.95px"></div>
<div class="rc" style="left:340.0px;top:354.95px"></div>
<div class="rc" style="left:370.3px;top:354.95px"></div>
<svg class="abs" style="left:282px;top:356.05px" width="20" height="20" fill="none" stroke="#1a1a1a" stroke-width=".75" stroke-linecap="round" stroke-linejoin="round"><circle cx="10" cy="10" r="6.2"/><g fill="#111" stroke="none"><path d="M8.8 2.4l2.4 1.4-2.4 1.4z"/><path d="M14.8 9.2l1.4 2.4 1.4-2.4z"/><path d="M11.2 14.6l-2.4 1.4 2.4 1.4z"/><path d="M2.4 10.8l1.4-2.4 1.4 2.4z"/></g></svg>
<svg class="abs" style="left:311.2px;top:356.05px" width="20" height="20" fill="none" stroke="#1a1a1a" stroke-width=".75" stroke-linecap="round" stroke-linejoin="round"><path d="M7.2 2.8h5.4v2.2H7.2z"/><path d="M8 5L7.5 6.5M12 5l.5 1.5"/><path d="M7.5 6.5C4.2 8.5 4 12 4.3 14 4.6 16.2 6.5 17 10 17s5.4-.8 5.7-3c.2-1.5-.1-3.5-1.1-5"/><path d="M7.5 6.5h5"/><path d="M11.6 9.6c-.4-.8-2.8-1-2.8.6 0 1.4 2.8 1.1 2.8 2.6s-2.6 1.5-3 .6M10.2 8.2V15"/><path d="M12.8 11.5l4.6-4.8M15.2 6.5h2.4v2.4"/></svg>
<svg class="abs" style="left:341.1px;top:356.05px" width="20" height="20" fill="none" stroke="#1a1a1a" stroke-width=".75" stroke-linecap="round" stroke-linejoin="round"><path d="M9 2.6h2v1.8H9zM8.3 5.4h3.4v1.6H8.3z"/><circle cx="5" cy="11" r="1.2"/><path d="M2.6 16.4v-3.4h4.8v3.4z"/><circle cx="15" cy="11" r="1.2"/><path d="M12.6 16.4v-3.4h4.8v3.4z"/><path d="M4.6 9c.6-2.2 2-3.4 3.2-3.8M15.4 9c-.6-2.2-2-3.4-3.2-3.8M7.6 17.4c1.5.8 3.3.8 4.8 0" stroke-dasharray="1.2 1.2" stroke="#666"/></svg>
<svg class="abs" style="left:371.4px;top:356.05px" width="20" height="20" fill="none" stroke="#1a1a1a" stroke-width=".75" stroke-linecap="round" stroke-linejoin="round"><path d="M3.2 7.2l2-2.6 1.6 1.4-2 2.6z"/><path d="M2.8 9.5l2.4-1.3"/><path d="M7.5 5.4h2M10.5 5.4h2M7.8 7.6h1.5M10.3 7.6h2.2" /><path d="M12.5 8.5v1.5M12.5 11v1.5"/><path d="M10 12.6h3.5"/><path d="M10.2 15.5c0-1.2.8-2 2.2-2s2.2.8 2.2 2"/><path d="M8.8 17.6h8M9.8 16.3h6" stroke-width=".9"/></svg>
<div class="t n" style="left:405px;top:361.46px;font-size:10.15px;color:#3f7ff0;font-weight:normal;text-decoration:underline;letter-spacing:-0.027px;">RR25000064</div>
<div class="t n" style="left:529.4px;top:354.16px;font-size:10.5px;color:#222;font-weight:normal;">DLXPACCTWN</div>
<div class="t n" style="left:529.4px;top:367.26px;font-size:10.5px;color:#222;font-weight:normal;">DLXPACCTWN</div>
<div class="t" style="left:657.7px;top:354.16px;font-size:10.5px;color:#222;font-weight:bold;">106</div>
<div class="t n" style="left:657.7px;top:367.26px;font-size:10.5px;color:#222;font-weight:normal;">Deluxe Pool Access T...</div>
<div class="t n" style="left:782.3px;top:360.26px;font-size:10.5px;color:#222;font-weight:normal;">Fafa Af | Miss</div>
<div class="rl" style="top:384.60px"></div>
<div class="cb" style="left:214px;top:392.80px"></div>
<svg class="abs" style="left:249px;top:392.50px" width="25" height="26"><circle cx="12.2" cy="12.8" r="11" fill="#c8c8c8"/><circle cx="12.5" cy="12" r="11" fill="#2f9a5c"/><path d="M12.5 4.5 A7.5 7.5 0 1 0 20 12" fill="none" stroke="#fff" stroke-width="1"/><path d="M8.2 12.1l2.8 2.6 5.2-5.2" fill="none" stroke="#fff" stroke-width="2.3" stroke-linecap="round" stroke-linejoin="round"/></svg>
<div class="rc" style="left:280.9px;top:393.40px"></div>
<div class="rc" style="left:310.1px;top:393.40px"></div>
<div class="rc" style="left:340.0px;top:393.40px"></div>
<div class="rc" style="left:370.3px;top:393.40px"></div>
<svg class="abs" style="left:282px;top:394.50px" width="20" height="20" fill="none" stroke="#1a1a1a" stroke-width=".75" stroke-linecap="round" stroke-linejoin="round"><circle cx="10" cy="10" r="6.2"/><g fill="#111" stroke="none"><path d="M8.8 2.4l2.4 1.4-2.4 1.4z"/><path d="M14.8 9.2l1.4 2.4 1.4-2.4z"/><path d="M11.2 14.6l-2.4 1.4 2.4 1.4z"/><path d="M2.4 10.8l1.4-2.4 1.4 2.4z"/></g></svg>
<svg class="abs" style="left:311.2px;top:394.50px" width="20" height="20" fill="none" stroke="#1a1a1a" stroke-width=".75" stroke-linecap="round" stroke-linejoin="round"><path d="M7.2 2.8h5.4v2.2H7.2z"/><path d="M8 5L7.5 6.5M12 5l.5 1.5"/><path d="M7.5 6.5C4.2 8.5 4 12 4.3 14 4.6 16.2 6.5 17 10 17s5.4-.8 5.7-3c.2-1.5-.1-3.5-1.1-5"/><path d="M7.5 6.5h5"/><path d="M11.6 9.6c-.4-.8-2.8-1-2.8.6 0 1.4 2.8 1.1 2.8 2.6s-2.6 1.5-3 .6M10.2 8.2V15"/><path d="M12.8 11.5l4.6-4.8M15.2 6.5h2.4v2.4"/></svg>
<svg class="abs" style="left:341.1px;top:394.50px" width="20" height="20" fill="none" stroke="#1a1a1a" stroke-width=".75" stroke-linecap="round" stroke-linejoin="round"><path d="M9 2.6h2v1.8H9zM8.3 5.4h3.4v1.6H8.3z"/><circle cx="5" cy="11" r="1.2"/><path d="M2.6 16.4v-3.4h4.8v3.4z"/><circle cx="15" cy="11" r="1.2"/><path d="M12.6 16.4v-3.4h4.8v3.4z"/><path d="M4.6 9c.6-2.2 2-3.4 3.2-3.8M15.4 9c-.6-2.2-2-3.4-3.2-3.8M7.6 17.4c1.5.8 3.3.8 4.8 0" stroke-dasharray="1.2 1.2" stroke="#666"/></svg>
<svg class="abs" style="left:371.4px;top:394.50px" width="20" height="20" fill="none" stroke="#1a1a1a" stroke-width=".75" stroke-linecap="round" stroke-linejoin="round"><path d="M3.2 7.2l2-2.6 1.6 1.4-2 2.6z"/><path d="M2.8 9.5l2.4-1.3"/><path d="M7.5 5.4h2M10.5 5.4h2M7.8 7.6h1.5M10.3 7.6h2.2" /><path d="M12.5 8.5v1.5M12.5 11v1.5"/><path d="M10 12.6h3.5"/><path d="M10.2 15.5c0-1.2.8-2 2.2-2s2.2.8 2.2 2"/><path d="M8.8 17.6h8M9.8 16.3h6" stroke-width=".9"/></svg>
<div class="t n" style="left:405px;top:399.91px;font-size:10.15px;color:#3f7ff0;font-weight:normal;text-decoration:underline;letter-spacing:-0.027px;">RR25000067</div>
<div class="t n" style="left:529.4px;top:392.61px;font-size:10.5px;color:#222;font-weight:normal;">DLXT</div>
<div class="t n" style="left:529.4px;top:405.71px;font-size:10.5px;color:#222;font-weight:normal;">DLXT</div>
<div class="t" style="left:657.7px;top:392.61px;font-size:10.5px;color:#222;font-weight:bold;">205</div>
<div class="t n" style="left:657.7px;top:405.71px;font-size:10.5px;color:#222;font-weight:normal;letter-spacing:0.085px;">Deluxe Twin</div>
<svg class="abs" style="left:719.3px;top:404.90px" width="28" height="10" fill="none" stroke="#262626" stroke-width="1.05" stroke-linecap="round"><path d="M1.2 3.2V7.6Q1.2 9 2.7 9H3.4Q5 9 5 7.6V3.2M1 1.5H5.2M1.2 7.2l.9.9"/><path d="M6.6 9V4.8Q6.6 3 8.6 3T10.8 4.8V9M6.6 6.6l-.7.7"/><path d="M12.2 3.3Q15 2.6 15.2 4.4V9"/><path d="M17.6 3.2V7.6Q17.6 9 19.6 9T22.4 7.6V3.2M20 6.2l1.6 1.6"/><path d="M23.4 3.3Q26.2 2.6 26.4 4.4V9"/></svg>
<div class="t n" style="left:782.3px;top:398.71px;font-size:10.5px;color:#222;font-weight:normal;">Jason SON | Mr.</div>
<div class="rl" style="top:423.05px"></div>
<div class="cb" style="left:214px;top:431.25px"></div>
<svg class="abs" style="left:249px;top:430.95px" width="25" height="26"><circle cx="12.2" cy="12.8" r="11" fill="#c8c8c8"/><circle cx="12.5" cy="12" r="11" fill="#2f9a5c"/><path d="M12.5 4.5 A7.5 7.5 0 1 0 20 12" fill="none" stroke="#fff" stroke-width="1"/><path d="M8.2 12.1l2.8 2.6 5.2-5.2" fill="none" stroke="#fff" stroke-width="2.3" stroke-linecap="round" stroke-linejoin="round"/></svg>
<div class="rc" style="left:280.9px;top:431.85px"></div>
<div class="rc" style="left:310.1px;top:431.85px"></div>
<div class="rc" style="left:340.0px;top:431.85px"></div>
<div class="rc" style="left:370.3px;top:431.85px"></div>
<svg class="abs" style="left:282px;top:432.95px" width="20" height="20" fill="none" stroke="#1a1a1a" stroke-width=".75" stroke-linecap="round" stroke-linejoin="round"><circle cx="10" cy="10" r="6.2"/><g fill="#111" stroke="none"><path d="M8.8 2.4l2.4 1.4-2.4 1.4z"/><path d="M14.8 9.2l1.4 2.4 1.4-2.4z"/><path d="M11.2 14.6l-2.4 1.4 2.4 1.4z"/><path d="M2.4 10.8l1.4-2.4 1.4 2.4z"/></g></svg>
<svg class="abs" style="left:311.2px;top:432.95px" width="20" height="20" fill="none" stroke="#1a1a1a" stroke-width=".75" stroke-linecap="round" stroke-linejoin="round"><path d="M7.2 2.8h5.4v2.2H7.2z"/><path d="M8 5L7.5 6.5M12 5l.5 1.5"/><path d="M7.5 6.5C4.2 8.5 4 12 4.3 14 4.6 16.2 6.5 17 10 17s5.4-.8 5.7-3c.2-1.5-.1-3.5-1.1-5"/><path d="M7.5 6.5h5"/><path d="M11.6 9.6c-.4-.8-2.8-1-2.8.6 0 1.4 2.8 1.1 2.8 2.6s-2.6 1.5-3 .6M10.2 8.2V15"/><path d="M12.8 11.5l4.6-4.8M15.2 6.5h2.4v2.4"/></svg>
<svg class="abs" style="left:341.1px;top:432.95px" width="20" height="20" fill="none" stroke="#1a1a1a" stroke-width=".75" stroke-linecap="round" stroke-linejoin="round"><path d="M9 2.6h2v1.8H9zM8.3 5.4h3.4v1.6H8.3z"/><circle cx="5" cy="11" r="1.2"/><path d="M2.6 16.4v-3.4h4.8v3.4z"/><circle cx="15" cy="11" r="1.2"/><path d="M12.6 16.4v-3.4h4.8v3.4z"/><path d="M4.6 9c.6-2.2 2-3.4 3.2-3.8M15.4 9c-.6-2.2-2-3.4-3.2-3.8M7.6 17.4c1.5.8 3.3.8 4.8 0" stroke-dasharray="1.2 1.2" stroke="#666"/></svg>
<svg class="abs" style="left:371.4px;top:432.95px" width="20" height="20" fill="none" stroke="#1a1a1a" stroke-width=".75" stroke-linecap="round" stroke-linejoin="round"><path d="M3.2 7.2l2-2.6 1.6 1.4-2 2.6z"/><path d="M2.8 9.5l2.4-1.3"/><path d="M7.5 5.4h2M10.5 5.4h2M7.8 7.6h1.5M10.3 7.6h2.2" /><path d="M12.5 8.5v1.5M12.5 11v1.5"/><path d="M10 12.6h3.5"/><path d="M10.2 15.5c0-1.2.8-2 2.2-2s2.2.8 2.2 2"/><path d="M8.8 17.6h8M9.8 16.3h6" stroke-width=".9"/></svg>
<div class="t n" style="left:405px;top:438.36px;font-size:10.15px;color:#3f7ff0;font-weight:normal;text-decoration:underline;letter-spacing:0.051px;">RR25000068-2</div>
<div class="t n" style="left:529.4px;top:431.06px;font-size:10.5px;color:#222;font-weight:normal;">DLXT</div>
<div class="t n" style="left:529.4px;top:444.16px;font-size:10.5px;color:#222;font-weight:normal;">DLXT</div>
<div class="t n" style="left:657.7px;top:437.16px;font-size:10.5px;color:#222;font-weight:normal;letter-spacing:0.085px;">Deluxe Twin</div>
<svg class="abs" style="left:719.3px;top:436.35px" width="28" height="10" fill="none" stroke="#262626" stroke-width="1.05" stroke-linecap="round"><path d="M1.2 3.2V7.6Q1.2 9 2.7 9H3.4Q5 9 5 7.6V3.2M1 1.5H5.2M1.2 7.2l.9.9"/><path d="M6.6 9V4.8Q6.6 3 8.6 3T10.8 4.8V9M6.6 6.6l-.7.7"/><path d="M12.2 3.3Q15 2.6 15.2 4.4V9"/><path d="M17.6 3.2V7.6Q17.6 9 19.6 9T22.4 7.6V3.2M20 6.2l1.6 1.6"/><path d="M23.4 3.3Q26.2 2.6 26.4 4.4V9"/></svg>
<div class="t n" style="left:782.3px;top:437.16px;font-size:10.5px;color:#222;font-weight:normal;">Tippa PA | Mrs.</div>
<div class="rl" style="top:461.50px"></div>
<div class="cb" style="left:214px;top:469.70px"></div>
<svg class="abs" style="left:249px;top:469.40px" width="25" height="26"><circle cx="12.2" cy="12.8" r="11" fill="#c8c8c8"/><circle cx="12.5" cy="12" r="11" fill="#2f9a5c"/><path d="M12.5 4.5 A7.5 7.5 0 1 0 20 12" fill="none" stroke="#fff" stroke-width="1"/><path d="M8.2 12.1l2.8 2.6 5.2-5.2" fill="none" stroke="#fff" stroke-width="2.3" stroke-linecap="round" stroke-linejoin="round"/></svg>
<div class="rc" style="left:280.9px;top:470.30px"></div>
<div class="rc" style="left:310.1px;top:470.30px"></div>
<div class="rc" style="left:340.0px;top:470.30px"></div>
<div class="rc" style="left:370.3px;top:470.30px"></div>
<svg class="abs" style="left:282px;top:471.40px" width="20" height="20" fill="none" stroke="#1a1a1a" stroke-width=".75" stroke-linecap="round" stroke-linejoin="round"><circle cx="10" cy="10" r="6.2"/><g fill="#111" stroke="none"><path d="M8.8 2.4l2.4 1.4-2.4 1.4z"/><path d="M14.8 9.2l1.4 2.4 1.4-2.4z"/><path d="M11.2 14.6l-2.4 1.4 2.4 1.4z"/><path d="M2.4 10.8l1.4-2.4 1.4 2.4z"/></g></svg>
<svg class="abs" style="left:311.2px;top:471.40px" width="20" height="20" fill="none" stroke="#1a1a1a" stroke-width=".75" stroke-linecap="round" stroke-linejoin="round"><path d="M7.2 2.8h5.4v2.2H7.2z"/><path d="M8 5L7.5 6.5M12 5l.5 1.5"/><path d="M7.5 6.5C4.2 8.5 4 12 4.3 14 4.6 16.2 6.5 17 10 17s5.4-.8 5.7-3c.2-1.5-.1-3.5-1.1-5"/><path d="M7.5 6.5h5"/><path d="M11.6 9.6c-.4-.8-2.8-1-2.8.6 0 1.4 2.8 1.1 2.8 2.6s-2.6 1.5-3 .6M10.2 8.2V15"/><path d="M12.8 11.5l4.6-4.8M15.2 6.5h2.4v2.4"/></svg>
<svg class="abs" style="left:341.1px;top:471.40px" width="20" height="20" fill="none" stroke="#1a1a1a" stroke-width=".75" stroke-linecap="round" stroke-linejoin="round"><path d="M9 2.6h2v1.8H9zM8.3 5.4h3.4v1.6H8.3z"/><circle cx="5" cy="11" r="1.2"/><path d="M2.6 16.4v-3.4h4.8v3.4z"/><circle cx="15" cy="11" r="1.2"/><path d="M12.6 16.4v-3.4h4.8v3.4z"/><path d="M4.6 9c.6-2.2 2-3.4 3.2-3.8M15.4 9c-.6-2.2-2-3.4-3.2-3.8M7.6 17.4c1.5.8 3.3.8 4.8 0" stroke-dasharray="1.2 1.2" stroke="#666"/></svg>
<svg class="abs" style="left:371.4px;top:471.40px" width="20" height="20" fill="none" stroke="#1a1a1a" stroke-width=".75" stroke-linecap="round" stroke-linejoin="round"><path d="M3.2 7.2l2-2.6 1.6 1.4-2 2.6z"/><path d="M2.8 9.5l2.4-1.3"/><path d="M7.5 5.4h2M10.5 5.4h2M7.8 7.6h1.5M10.3 7.6h2.2" /><path d="M12.5 8.5v1.5M12.5 11v1.5"/><path d="M10 12.6h3.5"/><path d="M10.2 15.5c0-1.2.8-2 2.2-2s2.2.8 2.2 2"/><path d="M8.8 17.6h8M9.8 16.3h6" stroke-width=".9"/></svg>
<div class="t n" style="left:405px;top:476.81px;font-size:10.15px;color:#3f7ff0;font-weight:normal;text-decoration:underline;letter-spacing:-0.027px;">RR25000069</div>
<div class="t n" style="left:529.4px;top:469.51px;font-size:10.5px;color:#222;font-weight:normal;">RVS</div>
<div class="t n" style="left:529.4px;top:482.61px;font-size:10.5px;color:#222;font-weight:normal;">RVS</div>
<div class="t" style="left:657.7px;top:469.51px;font-size:10.5px;color:#222;font-weight:bold;">134</div>
<div class="t n" style="left:657.7px;top:482.61px;font-size:10.5px;color:#222;font-weight:normal;">River Suite</div>
<div class="t n" style="left:782.3px;top:475.61px;font-size:10.5px;color:#222;font-weight:normal;">Girl GG | Miss</div>
<div class="rl" style="top:499.95px"></div>
<div class="cb" style="left:214px;top:508.15px"></div>
<svg class="abs" style="left:249px;top:507.85px" width="25" height="26"><circle cx="12.2" cy="12.8" r="11" fill="#c8c8c8"/><circle cx="12.5" cy="12" r="11" fill="#2f9a5c"/><path d="M12.5 4.5 A7.5 7.5 0 1 0 20 12" fill="none" stroke="#fff" stroke-width="1"/><path d="M8.2 12.1l2.8 2.6 5.2-5.2" fill="none" stroke="#fff" stroke-width="2.3" stroke-linecap="round" stroke-linejoin="round"/></svg>
<div class="rc" style="left:280.9px;top:508.75px"></div>
<div class="rc" style="left:310.1px;top:508.75px"></div>
<div class="rc" style="left:340.0px;top:508.75px"></div>
<div class="rc" style="left:370.3px;top:508.75px"></div>
<svg class="abs" style="left:282px;top:509.85px" width="20" height="20" fill="none" stroke="#1a1a1a" stroke-width=".75" stroke-linecap="round" stroke-linejoin="round"><circle cx="10" cy="10" r="6.2"/><g fill="#111" stroke="none"><path d="M8.8 2.4l2.4 1.4-2.4 1.4z"/><path d="M14.8 9.2l1.4 2.4 1.4-2.4z"/><path d="M11.2 14.6l-2.4 1.4 2.4 1.4z"/><path d="M2.4 10.8l1.4-2.4 1.4 2.4z"/></g></svg>
<svg class="abs" style="left:311.2px;top:509.85px" width="20" height="20" fill="none" stroke="#1a1a1a" stroke-width=".75" stroke-linecap="round" stroke-linejoin="round"><path d="M7.2 2.8h5.4v2.2H7.2z"/><path d="M8 5L7.5 6.5M12 5l.5 1.5"/><path d="M7.5 6.5C4.2 8.5 4 12 4.3 14 4.6 16.2 6.5 17 10 17s5.4-.8 5.7-3c.2-1.5-.1-3.5-1.1-5"/><path d="M7.5 6.5h5"/><path d="M11.6 9.6c-.4-.8-2.8-1-2.8.6 0 1.4 2.8 1.1 2.8 2.6s-2.6 1.5-3 .6M10.2 8.2V15"/><path d="M12.8 11.5l4.6-4.8M15.2 6.5h2.4v2.4"/></svg>
<svg class="abs" style="left:341.1px;top:509.85px" width="20" height="20" fill="none" stroke="#1a1a1a" stroke-width=".75" stroke-linecap="round" stroke-linejoin="round"><path d="M9 2.6h2v1.8H9zM8.3 5.4h3.4v1.6H8.3z"/><circle cx="5" cy="11" r="1.2"/><path d="M2.6 16.4v-3.4h4.8v3.4z"/><circle cx="15" cy="11" r="1.2"/><path d="M12.6 16.4v-3.4h4.8v3.4z"/><path d="M4.6 9c.6-2.2 2-3.4 3.2-3.8M15.4 9c-.6-2.2-2-3.4-3.2-3.8M7.6 17.4c1.5.8 3.3.8 4.8 0" stroke-dasharray="1.2 1.2" stroke="#666"/></svg>
<svg class="abs" style="left:371.4px;top:509.85px" width="20" height="20" fill="none" stroke="#1a1a1a" stroke-width=".75" stroke-linecap="round" stroke-linejoin="round"><path d="M3.2 7.2l2-2.6 1.6 1.4-2 2.6z"/><path d="M2.8 9.5l2.4-1.3"/><path d="M7.5 5.4h2M10.5 5.4h2M7.8 7.6h1.5M10.3 7.6h2.2" /><path d="M12.5 8.5v1.5M12.5 11v1.5"/><path d="M10 12.6h3.5"/><path d="M10.2 15.5c0-1.2.8-2 2.2-2s2.2.8 2.2 2"/><path d="M8.8 17.6h8M9.8 16.3h6" stroke-width=".9"/></svg>
<div class="t n" style="left:405px;top:515.26px;font-size:10.15px;color:#3f7ff0;font-weight:normal;text-decoration:underline;letter-spacing:-0.027px;">RR25000071</div>
<div class="t n" style="left:529.4px;top:507.96px;font-size:10.5px;color:#222;font-weight:normal;">DPC</div>
<div class="t n" style="left:529.4px;top:521.06px;font-size:10.5px;color:#222;font-weight:normal;">DPC</div>
<div class="t" style="left:657.7px;top:507.96px;font-size:10.5px;color:#222;font-weight:bold;">224</div>
<div class="t n" style="left:657.7px;top:521.06px;font-size:10.5px;color:#222;font-weight:normal;">Deluxe Parent-Child</div>
<div class="t n" style="left:782.3px;top:514.06px;font-size:10.5px;color:#222;font-weight:normal;">GERMA SMF | Khun</div>
<div class="rl" style="top:538.40px"></div>
<div class="cb" style="left:214px;top:546.60px"></div>
<svg class="abs" style="left:249px;top:546.30px" width="25" height="26"><circle cx="12.2" cy="12.8" r="11" fill="#c8c8c8"/><circle cx="12.5" cy="12" r="11" fill="#2f9a5c"/><path d="M12.5 4.5 A7.5 7.5 0 1 0 20 12" fill="none" stroke="#fff" stroke-width="1"/><path d="M8.2 12.1l2.8 2.6 5.2-5.2" fill="none" stroke="#fff" stroke-width="2.3" stroke-linecap="round" stroke-linejoin="round"/></svg>
<div class="rc" style="left:280.9px;top:547.20px"></div>
<div class="rc" style="left:310.1px;top:547.20px"></div>
<div class="rc" style="left:340.0px;top:547.20px"></div>
<div class="rc" style="left:370.3px;top:547.20px"></div>
<svg class="abs" style="left:282px;top:548.30px" width="20" height="20" fill="none" stroke="#1a1a1a" stroke-width=".75" stroke-linecap="round" stroke-linejoin="round"><circle cx="10" cy="10" r="6.2"/><g fill="#111" stroke="none"><path d="M8.8 2.4l2.4 1.4-2.4 1.4z"/><path d="M14.8 9.2l1.4 2.4 1.4-2.4z"/><path d="M11.2 14.6l-2.4 1.4 2.4 1.4z"/><path d="M2.4 10.8l1.4-2.4 1.4 2.4z"/></g></svg>
<svg class="abs" style="left:311.2px;top:548.30px" width="20" height="20" fill="none" stroke="#1a1a1a" stroke-width=".75" stroke-linecap="round" stroke-linejoin="round"><path d="M7.2 2.8h5.4v2.2H7.2z"/><path d="M8 5L7.5 6.5M12 5l.5 1.5"/><path d="M7.5 6.5C4.2 8.5 4 12 4.3 14 4.6 16.2 6.5 17 10 17s5.4-.8 5.7-3c.2-1.5-.1-3.5-1.1-5"/><path d="M7.5 6.5h5"/><path d="M11.6 9.6c-.4-.8-2.8-1-2.8.6 0 1.4 2.8 1.1 2.8 2.6s-2.6 1.5-3 .6M10.2 8.2V15"/><path d="M12.8 11.5l4.6-4.8M15.2 6.5h2.4v2.4"/></svg>
<svg class="abs" style="left:341.1px;top:548.30px" width="20" height="20" fill="none" stroke="#1a1a1a" stroke-width=".75" stroke-linecap="round" stroke-linejoin="round"><path d="M9 2.6h2v1.8H9zM8.3 5.4h3.4v1.6H8.3z"/><circle cx="5" cy="11" r="1.2"/><path d="M2.6 16.4v-3.4h4.8v3.4z"/><circle cx="15" cy="11" r="1.2"/><path d="M12.6 16.4v-3.4h4.8v3.4z"/><path d="M4.6 9c.6-2.2 2-3.4 3.2-3.8M15.4 9c-.6-2.2-2-3.4-3.2-3.8M7.6 17.4c1.5.8 3.3.8 4.8 0" stroke-dasharray="1.2 1.2" stroke="#666"/></svg>
<svg class="abs" style="left:371.4px;top:548.30px" width="20" height="20" fill="none" stroke="#1a1a1a" stroke-width=".75" stroke-linecap="round" stroke-linejoin="round"><path d="M3.2 7.2l2-2.6 1.6 1.4-2 2.6z"/><path d="M2.8 9.5l2.4-1.3"/><path d="M7.5 5.4h2M10.5 5.4h2M7.8 7.6h1.5M10.3 7.6h2.2" /><path d="M12.5 8.5v1.5M12.5 11v1.5"/><path d="M10 12.6h3.5"/><path d="M10.2 15.5c0-1.2.8-2 2.2-2s2.2.8 2.2 2"/><path d="M8.8 17.6h8M9.8 16.3h6" stroke-width=".9"/></svg>
<div class="t n" style="left:405px;top:553.71px;font-size:10.15px;color:#3f7ff0;font-weight:normal;text-decoration:underline;letter-spacing:-0.027px;">RR25000072</div>
<div class="t n" style="left:529.4px;top:546.41px;font-size:10.5px;color:#222;font-weight:normal;">DLXT</div>
<div class="t n" style="left:529.4px;top:559.51px;font-size:10.5px;color:#222;font-weight:normal;">DLXT</div>
<div class="t" style="left:657.7px;top:546.41px;font-size:10.5px;color:#222;font-weight:bold;">202</div>
<div class="t n" style="left:657.7px;top:559.51px;font-size:10.5px;color:#222;font-weight:normal;letter-spacing:0.085px;">Deluxe Twin</div>
<svg class="abs" style="left:719.3px;top:558.70px" width="28" height="10" fill="none" stroke="#262626" stroke-width="1.05" stroke-linecap="round"><path d="M1.2 3.2V7.6Q1.2 9 2.7 9H3.4Q5 9 5 7.6V3.2M1 1.5H5.2M1.2 7.2l.9.9"/><path d="M6.6 9V4.8Q6.6 3 8.6 3T10.8 4.8V9M6.6 6.6l-.7.7"/><path d="M12.2 3.3Q15 2.6 15.2 4.4V9"/><path d="M17.6 3.2V7.6Q17.6 9 19.6 9T22.4 7.6V3.2M20 6.2l1.6 1.6"/><path d="M23.4 3.3Q26.2 2.6 26.4 4.4V9"/></svg>
<div class="t n" style="left:782.3px;top:552.51px;font-size:10.5px;color:#222;font-weight:normal;">LUNA SMF | Khun</div>
<div class="rl" style="top:576.85px"></div>
<div class="cb" style="left:214px;top:585.05px"></div>
<svg class="abs" style="left:249px;top:584.75px" width="25" height="26"><circle cx="12.2" cy="12.8" r="11" fill="#c8c8c8"/><circle cx="12.5" cy="12" r="11" fill="#2f9a5c"/><path d="M12.5 4.5 A7.5 7.5 0 1 0 20 12" fill="none" stroke="#fff" stroke-width="1"/><path d="M8.2 12.1l2.8 2.6 5.2-5.2" fill="none" stroke="#fff" stroke-width="2.3" stroke-linecap="round" stroke-linejoin="round"/></svg>
<div class="rc" style="left:280.9px;top:585.65px"></div>
<div class="rc" style="left:310.1px;top:585.65px"></div>
<div class="rc" style="left:340.0px;top:585.65px"></div>
<div class="rc" style="left:370.3px;top:585.65px"></div>
<svg class="abs" style="left:282px;top:586.75px" width="20" height="20" fill="none" stroke="#1a1a1a" stroke-width=".75" stroke-linecap="round" stroke-linejoin="round"><circle cx="10" cy="10" r="6.2"/><g fill="#111" stroke="none"><path d="M8.8 2.4l2.4 1.4-2.4 1.4z"/><path d="M14.8 9.2l1.4 2.4 1.4-2.4z"/><path d="M11.2 14.6l-2.4 1.4 2.4 1.4z"/><path d="M2.4 10.8l1.4-2.4 1.4 2.4z"/></g></svg>
<svg class="abs" style="left:311.2px;top:586.75px" width="20" height="20" fill="none" stroke="#1a1a1a" stroke-width=".75" stroke-linecap="round" stroke-linejoin="round"><path d="M7.2 2.8h5.4v2.2H7.2z"/><path d="M8 5L7.5 6.5M12 5l.5 1.5"/><path d="M7.5 6.5C4.2 8.5 4 12 4.3 14 4.6 16.2 6.5 17 10 17s5.4-.8 5.7-3c.2-1.5-.1-3.5-1.1-5"/><path d="M7.5 6.5h5"/><path d="M11.6 9.6c-.4-.8-2.8-1-2.8.6 0 1.4 2.8 1.1 2.8 2.6s-2.6 1.5-3 .6M10.2 8.2V15"/><path d="M12.8 11.5l4.6-4.8M15.2 6.5h2.4v2.4"/></svg>
<svg class="abs" style="left:341.1px;top:586.75px" width="20" height="20" fill="none" stroke="#1a1a1a" stroke-width=".75" stroke-linecap="round" stroke-linejoin="round"><path d="M9 2.6h2v1.8H9zM8.3 5.4h3.4v1.6H8.3z"/><circle cx="5" cy="11" r="1.2"/><path d="M2.6 16.4v-3.4h4.8v3.4z"/><circle cx="15" cy="11" r="1.2"/><path d="M12.6 16.4v-3.4h4.8v3.4z"/><path d="M4.6 9c.6-2.2 2-3.4 3.2-3.8M15.4 9c-.6-2.2-2-3.4-3.2-3.8M7.6 17.4c1.5.8 3.3.8 4.8 0" stroke-dasharray="1.2 1.2" stroke="#666"/></svg>
<svg class="abs" style="left:371.4px;top:586.75px" width="20" height="20" fill="none" stroke="#1a1a1a" stroke-width=".75" stroke-linecap="round" stroke-linejoin="round"><path d="M3.2 7.2l2-2.6 1.6 1.4-2 2.6z"/><path d="M2.8 9.5l2.4-1.3"/><path d="M7.5 5.4h2M10.5 5.4h2M7.8 7.6h1.5M10.3 7.6h2.2" /><path d="M12.5 8.5v1.5M12.5 11v1.5"/><path d="M10 12.6h3.5"/><path d="M10.2 15.5c0-1.2.8-2 2.2-2s2.2.8 2.2 2"/><path d="M8.8 17.6h8M9.8 16.3h6" stroke-width=".9"/></svg>
<div class="t n" style="left:405px;top:592.16px;font-size:10.15px;color:#3f7ff0;font-weight:normal;text-decoration:underline;letter-spacing:-0.027px;">RR25000073</div>
<div class="t n" style="left:529.4px;top:584.86px;font-size:10.5px;color:#222;font-weight:normal;">DLXT</div>
<div class="t n" style="left:529.4px;top:597.96px;font-size:10.5px;color:#222;font-weight:normal;">DLXT</div>
<div class="t" style="left:657.7px;top:584.86px;font-size:10.5px;color:#222;font-weight:bold;">112</div>
<div class="t n" style="left:657.7px;top:597.96px;font-size:10.5px;color:#222;font-weight:normal;letter-spacing:0.085px;">Deluxe Twin</div>
<svg class="abs" style="left:719.3px;top:597.15px" width="28" height="10" fill="none" stroke="#262626" stroke-width="1.05" stroke-linecap="round"><path d="M1.2 3.2V7.6Q1.2 9 2.7 9H3.4Q5 9 5 7.6V3.2M1 1.5H5.2M1.2 7.2l.9.9"/><path d="M6.6 9V4.8Q6.6 3 8.6 3T10.8 4.8V9M6.6 6.6l-.7.7"/><path d="M12.2 3.3Q15 2.6 15.2 4.4V9"/><path d="M17.6 3.2V7.6Q17.6 9 19.6 9T22.4 7.6V3.2M20 6.2l1.6 1.6"/><path d="M23.4 3.3Q26.2 2.6 26.4 4.4V9"/></svg>
<div class="t n" style="left:782.3px;top:590.96px;font-size:10.5px;color:#222;font-weight:normal;">Nana NA | Miss</div>
<div class="abs" style="left:208px;top:616px;width:700px;height:1px;background:#e6e6e6"></div>
<div class="abs" style="left:208px;top:617px;width:411px;height:6px;border-radius:0 3px 3px 3px;background:#bdbdbd"></div>
<div class="abs" style="left:905px;top:0;width:441px;height:636px;background:#fff;border-radius:3px 0 0 0;box-shadow:-2px 0 4px rgba(0,0,0,.17)"></div>
<div class="t" style="left:919.6px;top:13.70px;font-size:12.4px;color:#222;font-weight:bold;letter-spacing:0.110px;">Search &amp; Filters</div>
<svg class="abs" style="left:1302px;top:15px" width="17" height="17"><path d="M3.2 3L14.2 14M14.2 3L3.2 14" stroke="#555" stroke-width="2.5" stroke-linecap="round"/></svg>
<div class="abs" style="left:905px;top:40px;width:441px;height:1px;background:#ececec"></div>
<div class="t n" style="left:939.7px;top:57.00px;font-size:9.8px;color:#790c4c;font-weight:normal;letter-spacing:-0.058px;">Search</div>
<div class="bx" style="left:928.4px;top:71.50px;width:396.5px;height:30.2px"></div>
<div class="abs" style="left:954.1px;top:111.9px;width:21.8px;height:21.8px;border-radius:50%;border:1px solid #bdbdbd;background:#fff"></div><div class="abs" style="left:958.4px;top:116.2px;width:13.2px;height:13.2px;border-radius:50%;background:#7a0038"></div>
<div class="t n" style="left:986.1px;top:117.10px;font-size:9.8px;color:#790c4c;font-weight:normal;letter-spacing:0.270px;">Arrival</div>
<div class="abs" style="left:1076.1px;top:111.9px;width:21.8px;height:21.8px;border-radius:50%;border:1px solid #bdbdbd;background:#fff"></div>
<div class="t n" style="left:1108px;top:117.10px;font-size:9.8px;color:#790c4c;font-weight:normal;letter-spacing:0.154px;">Booked On</div>
<div class="abs" style="left:1197.6px;top:111.9px;width:21.8px;height:21.8px;border-radius:50%;border:1px solid #bdbdbd;background:#fff"></div>
<div class="t n" style="left:1229.7px;top:117.10px;font-size:9.8px;color:#790c4c;font-weight:normal;letter-spacing:-0.024px;">Stay On</div>
<div class="t n" style="left:939.7px;top:143.00px;font-size:9.8px;color:#790c4c;font-weight:normal;letter-spacing:0.202px;">From</div>
<div class="t n" style="left:1145.9px;top:143.00px;font-size:9.8px;color:#790c4c;font-weight:normal;letter-spacing:-0.598px;">To</div>
<div class="bx" style="left:928.4px;top:157.40px;width:190.4px;height:29.2px"></div>
<div class="bx" style="left:1134.4px;top:157.40px;width:190.4px;height:29.2px"></div>
<div class="t n" style="left:935.8px;top:166.52px;font-size:11.2px;color:#222;font-weight:normal;letter-spacing:0.026px;">23/03/2025</div>
<div class="t n" style="left:1141.8px;top:166.52px;font-size:11.2px;color:#222;font-weight:normal;letter-spacing:0.026px;">24/03/2025</div>
<svg class="abs" style="left:1100px;top:165px" width="14" height="14"><g fill="#7a7a7a"><rect x="0.5" y="2" width="13" height="3.2"/><rect x="2.5" y="0.3" width="1.3" height="2.5"/><rect x="10.2" y="0.3" width="1.3" height="2.5"/></g><g fill="#8a8a8a"><rect x="0.5" y="5" width="1" height="8.5"/><rect x="0.5" y="12.7" width="13" height="1"/><rect x="12.5" y="5" width="1" height="8.5"/><rect x="3" y="9" width="1.6" height="3"/><rect x="5.6" y="7.5" width="1.6" height="4.5"/><rect x="8.2" y="7" width="1.6" height="5"/><rect x="10.5" y="6.5" width="1.3" height="5.5"/></g></svg>
<svg class="abs" style="left:1306px;top:165px" width="14" height="14"><g fill="#7a7a7a"><rect x="0.5" y="2" width="13" height="3.2"/><rect x="2.5" y="0.3" width="1.3" height="2.5"/><rect x="10.2" y="0.3" width="1.3" height="2.5"/></g><g fill="#8a8a8a"><rect x="0.5" y="5" width="1" height="8.5"/><rect x="0.5" y="12.7" width="13" height="1"/><rect x="12.5" y="5" width="1" height="8.5"/><rect x="3" y="9" width="1.6" height="3"/><rect x="5.6" y="7.5" width="1.6" height="4.5"/><rect x="8.2" y="7" width="1.6" height="5"/><rect x="10.5" y="6.5" width="1.3" height="5.5"/></g></svg>
<div class="t n" style="left:939.7px;top:195.90px;font-size:9.8px;color:#790c4c;font-weight:normal;letter-spacing:0.384px;">Building</div>
<div class="bx" style="left:928.4px;top:210.40px;width:190.4px;height:29.2px"></div>
<div class="t n" style="left:940.4px;top:219.56px;font-size:10.8px;color:#333;font-weight:normal;letter-spacing:-0.139px;">No Select</div>
<svg class="abs" style="left:1102.6px;top:223.2px" width="8" height="5"><path d="M0.8 0.8h6.4l-3.2 3.4z" fill="#808080"/></svg>
<div class="t n" style="left:1145.9px;top:195.90px;font-size:9.8px;color:#790c4c;font-weight:normal;letter-spacing:0.062px;">Booking Type</div>
<div class="bx" style="left:1134.4px;top:210.40px;width:190.4px;height:29.2px"></div>
<div class="t n" style="left:1146.4px;top:219.56px;font-size:10.8px;color:#333;font-weight:normal;letter-spacing:-0.139px;">No Select</div>
<svg class="abs" style="left:1308.6px;top:223.2px" width="8" height="5"><path d="M0.8 0.8h6.4l-3.2 3.4z" fill="#808080"/></svg>
<div class="t n" style="left:939.7px;top:248.00px;font-size:9.8px;color:#790c4c;font-weight:normal;letter-spacing:0.006px;">Guest Name</div>
<div class="bx" style="left:928.4px;top:262.50px;width:190.4px;height:30px"></div>
<div class="t n" style="left:1145.9px;top:248.00px;font-size:9.8px;color:#790c4c;font-weight:normal;letter-spacing:0.162px;">Company</div>
<div class="bx" style="left:1134.4px;top:262.50px;width:190.4px;height:30px"></div>
<div class="t n" style="left:939.7px;top:300.80px;font-size:9.8px;color:#790c4c;font-weight:normal;letter-spacing:0.205px;">Agent</div>
<div class="bx" style="left:928.4px;top:315.30px;width:190.4px;height:30px"></div>
<div class="t n" style="left:1145.9px;top:300.80px;font-size:9.8px;color:#790c4c;font-weight:normal;letter-spacing:-0.178px;">Source</div>
<div class="bx" style="left:1134.4px;top:315.30px;width:190.4px;height:30px"></div>
<div class="t n" style="left:939.7px;top:353.90px;font-size:9.8px;color:#790c4c;font-weight:normal;letter-spacing:0.195px;">Booking No.</div>
<div class="bx" style="left:928.4px;top:368.40px;width:190.4px;height:30px"></div>
<div class="t n" style="left:1145.9px;top:353.90px;font-size:9.8px;color:#790c4c;font-weight:normal;letter-spacing:-0.249px;">Rate Code</div>
<div class="bx" style="left:1134.4px;top:368.40px;width:190.4px;height:30px"></div>
<div class="t n" style="left:939.7px;top:407.00px;font-size:9.8px;color:#790c4c;font-weight:normal;letter-spacing:0.255px;">Mobile No.</div>
<div class="bx" style="left:928.4px;top:421.50px;width:190.4px;height:30px"></div>
<div class="t n" style="left:1145.9px;top:407.00px;font-size:9.8px;color:#790c4c;font-weight:normal;letter-spacing:0.045px;">Email</div>
<div class="bx" style="left:1134.4px;top:421.50px;width:190.4px;height:30px"></div>
<div class="t n" style="left:939.7px;top:459.80px;font-size:9.8px;color:#790c4c;font-weight:normal;letter-spacing:0.246px;">Nationality</div>
<div class="bx" style="left:928.4px;top:474.30px;width:190.4px;height:29.2px"></div>
<div class="t n" style="left:940.4px;top:483.46px;font-size:10.8px;color:#333;font-weight:normal;letter-spacing:-0.139px;">No Select</div>
<svg class="abs" style="left:1102.6px;top:487.1px" width="8" height="5"><path d="M0.8 0.8h6.4l-3.2 3.4z" fill="#808080"/></svg>
<div class="t n" style="left:1145.9px;top:459.80px;font-size:9.8px;color:#790c4c;font-weight:normal;letter-spacing:-0.286px;">VIP Type</div>
<div class="bx" style="left:1134.4px;top:474.30px;width:190.4px;height:29.2px"></div>
<div class="t n" style="left:1146.4px;top:483.46px;font-size:10.8px;color:#333;font-weight:normal;letter-spacing:-0.139px;">No Select</div>
<svg class="abs" style="left:1308.6px;top:487.1px" width="8" height="5"><path d="M0.8 0.8h6.4l-3.2 3.4z" fill="#808080"/></svg>
<div class="abs" style="left:956.1px;top:514.1px;width:21.8px;height:21.8px;border-radius:50%;border:1px solid #bdbdbd;background:#fff"></div><div class="abs" style="left:960.4px;top:518.4px;width:13.2px;height:13.2px;border-radius:50%;background:#7a0038"></div>
<div class="t n" style="left:988.4px;top:519.30px;font-size:9.8px;color:#790c4c;font-weight:normal;letter-spacing:0.009px;">None</div>
<div class="abs" style="left:1079.6px;top:514.1px;width:21.8px;height:21.8px;border-radius:50%;border:1px solid #bdbdbd;background:#fff"></div>
<div class="t n" style="left:1111.7px;top:519.30px;font-size:9.8px;color:#790c4c;font-weight:normal;letter-spacing:-0.051px;">Pickup</div>
<div class="abs" style="left:1203.1px;top:514.1px;width:21.8px;height:21.8px;border-radius:50%;border:1px solid #bdbdbd;background:#fff"></div>
<div class="t n" style="left:1235.4px;top:519.30px;font-size:9.8px;color:#790c4c;font-weight:normal;letter-spacing:0.321px;">Drop off</div>
<div class="t n" style="left:939.7px;top:544.90px;font-size:9.8px;color:#790c4c;font-weight:normal;letter-spacing:0.135px;">Room Type Original</div>
<div class="bx" style="left:928.4px;top:559.40px;width:190.4px;height:29.2px"></div>
<div class="t n" style="left:940.4px;top:568.66px;font-size:10.8px;color:#333;font-weight:normal;letter-spacing:-0.139px;">No Select</div>
<svg class="abs" style="left:1102.6px;top:572.4px" width="8" height="5"><path d="M0.8 0.8h6.4l-3.2 3.4z" fill="#808080"/></svg>
<div class="abs" style="left:1114.1px;top:601.1px;width:107px;height:29.7px;border-radius:4px;background:linear-gradient(100deg,#520a80 0%,#6a0760 45%,#8c0030 100%)"></div>
<div class="t" style="left:1151.2px;top:611.17px;font-size:11.5px;color:#fff;font-weight:bold;letter-spacing:-1.127px;">Search</div>
<div class="abs" style="left:1226.9px;top:601.1px;width:108px;height:29.7px;border-radius:4px;background:linear-gradient(90deg,#5a0a78,#8c0a3a)"></div>
<div class="abs" style="left:1228.1px;top:602.3px;width:105.6px;height:27.3px;border-radius:3px;background:#fff"></div>
<div class="t n" style="left:1268.1px;top:610.89px;font-size:11px;color:#790c4c;font-weight:normal;letter-spacing:-0.595px;">Reset</div>
</body></html>
